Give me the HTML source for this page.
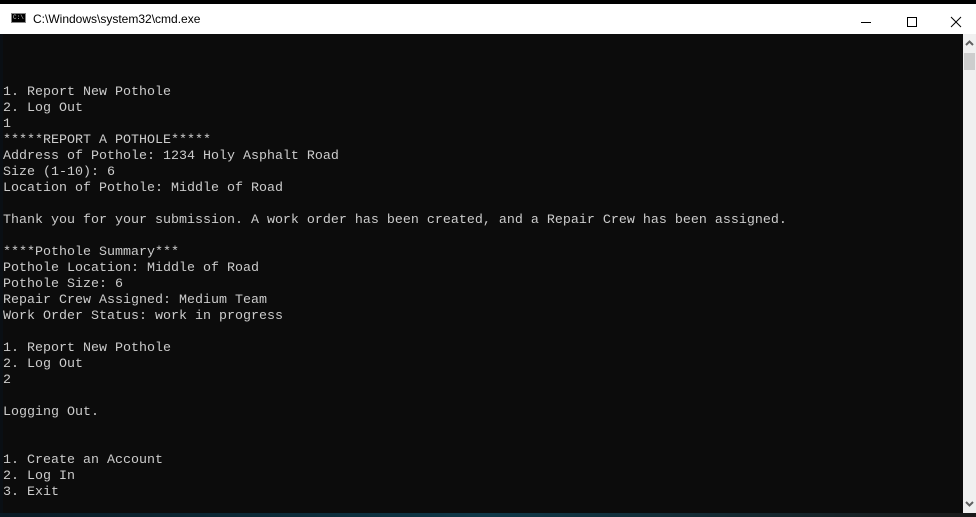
<!DOCTYPE html>
<html><head><style>
html,body{margin:0;padding:0;width:976px;height:517px;overflow:hidden;background:#0c0c0c;}
#top{position:absolute;left:0;top:0;width:976px;height:4px;background:#000;}
#title{position:absolute;left:0;top:4px;width:976px;height:30px;background:#fff;font-family:"Liberation Sans",sans-serif;font-size:12px;color:#000;}
#title .t{position:absolute;left:33px;top:8px;}
#icon{position:absolute;left:11px;top:9px;width:15px;height:10px;background:#000;border:1px solid #888;box-sizing:border-box;}
#icon span{position:absolute;left:1px;top:1px;font-size:6px;color:#ccc;font-family:"Liberation Mono",monospace;line-height:6px;}
#con{position:absolute;left:3px;top:34px;width:960px;height:479px;background:#0c0c0c;}
pre{margin:0;position:absolute;left:0;top:51px;font-family:"Liberation Mono",monospace;font-size:13.33px;line-height:16px;color:#cccccc;}
#sb{position:absolute;left:963px;top:34px;width:13px;height:479px;background:#f0f0f0;}
#thumb{position:absolute;left:1px;top:19px;width:11px;height:17px;background:#cdcdcd;}
#bot{position:absolute;left:0;top:513px;width:976px;height:4px;background:linear-gradient(90deg,#0a1a24,#103848 50%,#1a1a1a);}
#left{position:absolute;left:0;top:34px;width:3px;height:479px;background:#0a0f14;}
</style></head><body>
<div id="top"></div>
<div id="title"><div id="icon"><span>C:\</span></div><span class="t">C:\Windows\system32\cmd.exe</span>
<svg style="position:absolute;left:850px;top:8px" width="120" height="16">
<line x1="11" y1="10.5" x2="21" y2="10.5" stroke="#000" stroke-width="1"/>
<rect x="57.5" y="5.5" width="9" height="9" fill="none" stroke="#000"/>
<line x1="101" y1="5" x2="111" y2="15" stroke="#000"/><line x1="111" y1="5" x2="101" y2="15" stroke="#000"/>
</svg></div>
<div id="left"></div>
<div id="con"><pre>1. Report New Pothole
2. Log Out
1
*****REPORT A POTHOLE*****
Address of Pothole: 1234 Holy Asphalt Road
Size (1-10): 6
Location of Pothole: Middle of Road

Thank you for your submission. A work order has been created, and a Repair Crew has been assigned.

****Pothole Summary***
Pothole Location: Middle of Road
Pothole Size: 6
Repair Crew Assigned: Medium Team
Work Order Status: work in progress

1. Report New Pothole
2. Log Out
2

Logging Out.


1. Create an Account
2. Log In
3. Exit</pre></div>
<div id="sb"><div id="thumb"></div>
<svg style="position:absolute;left:2px;top:6px" width="9" height="6"><polyline points="1,5 4.5,1.5 8,5" fill="none" stroke="#606060" stroke-width="2"/></svg>
<svg style="position:absolute;left:2px;top:467px" width="9" height="6"><polyline points="1,1 4.5,4.5 8,1" fill="none" stroke="#606060" stroke-width="2"/></svg>
</div>
<div id="bot"></div>
</body></html>
